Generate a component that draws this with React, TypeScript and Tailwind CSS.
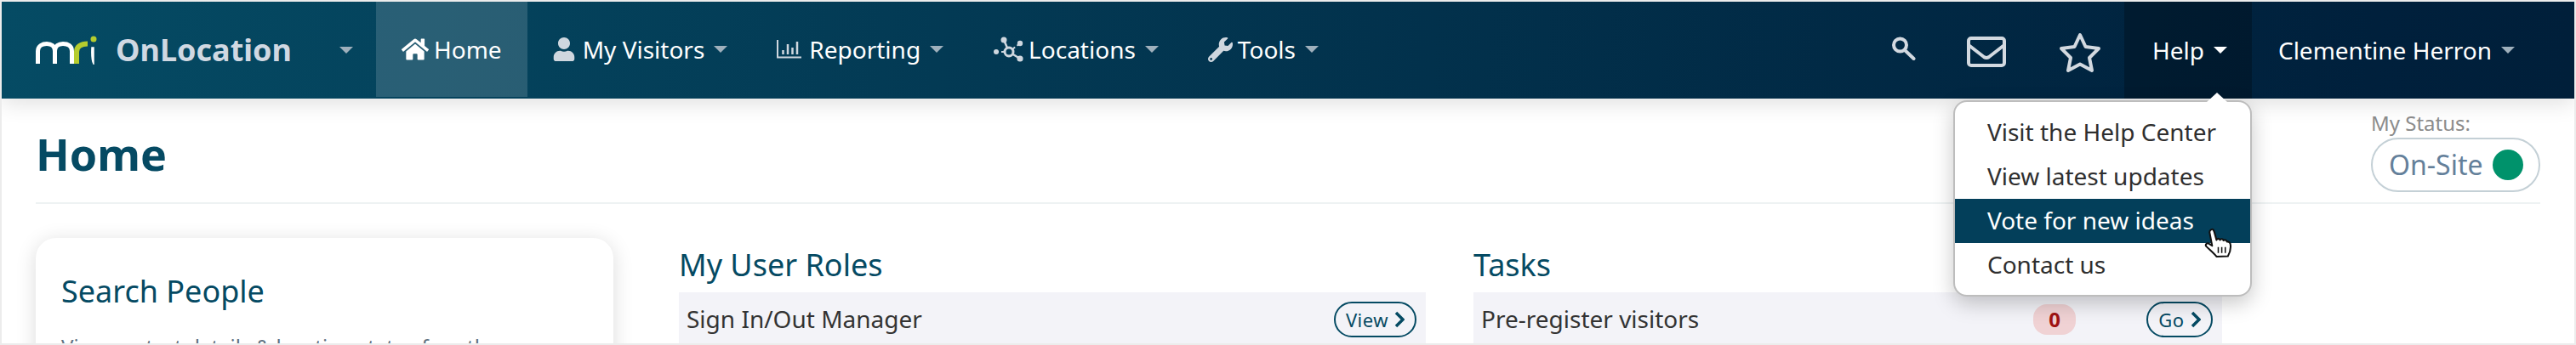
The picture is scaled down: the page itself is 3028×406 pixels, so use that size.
import type { ReactNode } from "react";
import { FaHome, FaUser, FaWrench } from "react-icons/fa";

const Caret = ({ active }: { active?: boolean }) => (
  <span
    className={`ml-[11px] inline-block h-0 w-0 border-x-[8px] border-t-[8px] border-x-transparent ${
      active ? "border-t-white" : "border-t-[#9fb0bc]"
    }`}
  />
);

function MriLogo() {
  return (
    <svg width="72" height="34" viewBox="0 0 72 34" fill="none" className="shrink-0">
      <path d="M2.5 33V18C2.5 12 8 9.5 13 9.5C18 9.5 22.5 12 22.5 18V33" stroke="#fff" strokeWidth="5" />
      <path d="M22.5 18C22.5 12 27 9.5 32 9.5C38 9.5 42.5 12 42.5 18V33" stroke="#fff" strokeWidth="5" />
      <path d="M48 33V19C48 13 53 9.5 61 9.5" stroke="#b5cc2e" strokeWidth="6" />
      <path d="M68 14V33C66 30 65.5 24 66 14Z" fill="#fff" stroke="#fff" strokeWidth="1.5" />
      <circle cx="68" cy="4" r="3.5" fill="#b5cc2e" />
    </svg>
  );
}

function ReportIcon() {
  return (
    <svg width="29" height="22" viewBox="0 0 29 22" fill="none" stroke="#cfd7df" className="mr-[9px]">
      <path d="M1 0V20.5H29" strokeWidth="2" />
      <path d="M7.5 12V17M13 5V17M18.5 9V17M24 2V17" strokeWidth="2.5" />
    </svg>
  );
}

function NetworkIcon() {
  return (
    <svg width="37" height="30" viewBox="0 0 37 30" fill="#cfd7df" stroke="#cfd7df" className="mr-[5px]">
      <path d="M19 18L13 4M19 18L32 26" strokeWidth="2.5" />
      <path d="M19 18H4M19 18L32 8" strokeWidth="2" strokeDasharray="3 3" />
      <circle cx="4" cy="18" r="3" stroke="none" />
      <circle cx="13" cy="4" r="3.5" stroke="none" />
      <circle cx="32" cy="8" r="3.2" stroke="none" />
      <circle cx="32" cy="26" r="3.6" stroke="none" />
      <circle cx="19" cy="18" r="5" fill="#033a55" strokeWidth="3" />
    </svg>
  );
}

function NavItem({ icon, label, active }: { icon: ReactNode; label: string; active?: boolean }) {
  return (
    <div className={`flex h-[112px] items-center self-start ${active ? "bg-white/15 px-[30px]" : "px-[29px]"}`}>
      {icon}
      <span className="text-[28px] text-white">{label}</span>
      {!active && <Caret />}
    </div>
  );
}

function Chevron() {
  return (
    <svg width="12" height="20" viewBox="0 0 12 20" fill="none" stroke="#054a63" strokeWidth="3.5" className="ml-[7px]">
      <path d="M2 2L10 10L2 18" />
    </svg>
  );
}

function PillButton({ label, width }: { label: string; width: string }) {
  return (
    <span className={`flex h-[42px] items-center justify-center rounded-full border-2 border-[#054a63] text-[22px] tracking-[0.5px] text-[#054a63] ${width}`}>
      {label}
      <Chevron />
    </span>
  );
}

const helpItems = ["Visit the Help Center", "View latest updates", "Vote for new ideas", "Contact us"];

function HelpMenu() {
  return (
    <div className="absolute top-full right-0 z-20 mt-[2px] w-[351px] rounded-2xl border-2 border-[#bdbdbd] bg-white pt-[10px] pb-[9px] shadow-[0_8px_24px_rgba(0,0,0,0.22)]">
      <span className="absolute -top-[11px] right-[27px] h-0 w-0 border-x-[12px] border-b-[11px] border-x-transparent border-b-white" />
      {helpItems.map((item, i) => (
        <div
          key={item}
          className={`flex h-[52px] items-center pb-[2px] pl-[38px] text-[28px] ${
            i === 2 ? "bg-[#033f5a] text-white" : "text-[#2f2f2f]"
          }`}
        >
          {item}
        </div>
      ))}
      {/* mouse pointer caught in the shot */}
      <svg width="33" height="35" viewBox="0 0 32 34" className="absolute top-[148px] right-[21px]">
        <path
          d="M8 2C10 1 11 3 11.500 5L14 14C15 12 17 12 18 14C19 12.500 21 12.500 22 14.500C23 13.500 25.500 14 26 16C28 15.500 30 17 30 20C30.500 25 29 29 27 32.500L14 33C11 29 6 25 2 21C1 19 3 17 5 18L9 20.500L6 5C6 3.500 7 2.500 8 2Z"
          fill="#fff"
          stroke="#111"
          strokeWidth="2"
          strokeLinejoin="round"
        />
        <path d="M16 22V29M20 22V29M24 22V29" stroke="#111" strokeWidth="1.5" />
      </svg>
    </div>
  );
}

function Row({ label, children }: { label: string; children: ReactNode }) {
  return (
    <div className="flex h-[64px] items-center bg-[#f3f3f8] pr-[11px] pl-[9px] text-[28px] text-[#333]">
      <span className="mb-[2px] flex-1">{label}</span>
      {children}
    </div>
  );
}

export default function App() {
  return (
    <div className="relative h-[406px] w-[3028px] overflow-hidden border-2 border-[#ececec] bg-white font-['Noto_Sans',sans-serif]">
      <nav className="relative z-10 flex h-[114px] items-center bg-[linear-gradient(95deg,#054b64_0%,#00203c_92%,#001f3a_100%)] shadow-[0_6px_24px_rgba(0,0,0,0.12)]">
        <div className="flex w-[440px] items-center pl-[40px]">
          <MriLogo />
          <span className="ml-[22px] text-[36px] font-bold text-[#d0d8e2]">OnLocation</span>
          <span className="ml-[56px] h-0 w-0 border-x-[8px] border-t-[8px] border-x-transparent border-t-[#9fb0bc]" />
        </div>
        <NavItem active label="Home" icon={<FaHome size={32} className="mr-[6px] text-white" />} />
        <NavItem label="My Visitors" icon={<FaUser size={28} className="mr-2 text-[#cfd7df]" />} />
        <NavItem label="Reporting" icon={<ReportIcon />} />
        <NavItem label="Locations" icon={<NetworkIcon />} />
        <NavItem label="Tools" icon={<FaWrench size={29} className="mr-[6px] text-[#cfd7df]" />} />
        <div className="flex-1" />
        <svg width="28" height="30" viewBox="0 0 28 30" fill="none" stroke="#d3d9e0" strokeWidth="4" className="mb-[4px]">
          <circle cx="9.500" cy="11" r="7.500" />
          <path d="M15 17L25.500 27" strokeLinecap="round" />
        </svg>
        <svg width="46" height="36" viewBox="0 0 46 36" fill="none" stroke="#d3d9e0" strokeWidth="4" className="mt-[4px] ml-[60px]">
          <rect x="2" y="2" width="42" height="32" rx="3" />
          <path d="M2 10L20 24Q23 26 26 24L44 10" />
        </svg>
        <svg width="50" height="48" viewBox="0 0 50 48" fill="none" stroke="#d3d9e0" strokeWidth="4" strokeLinejoin="round" className="mt-[5px] ml-[62px]">
          <path d="M25 3L31.500 17L47 19L36 30L39 45L25 37.500L11 45L14 30L3 19L18.500 17Z" />
        </svg>
        <div className="relative ml-[27px] flex h-[114px] items-center bg-black/25 pr-[29px] pl-[33px]">
          <span className="text-[28px] text-white">Help</span>
          <Caret active />
          <HelpMenu />
        </div>
        <div className="flex items-center pr-[70px] pl-[31px]">
          <span className="text-[28px] text-white">Clementine Herron</span>
          <Caret />
        </div>
      </nav>

      <main className="px-[40px]">
        <header className="flex h-[124px] justify-between border-b-2 border-[#eef2f3]">
          <h1 className="mt-[30px] text-[52px] leading-[70px] font-bold text-[#054a63]">Home</h1>
          <div className="mt-[12px]">
            <div className="text-[24px] leading-[34px] text-[#8c8c8c]">My Status:</div>
            <div className="flex h-[64px] w-[199px] items-center rounded-full border-2 border-[#c4d0d6] pl-[19px]">
              <span className="text-[32px] text-[#64809a]">On-Site</span>
              <span className="ml-[11px] h-[36px] w-[36px] rounded-full bg-[#00926b]" />
            </div>
          </div>
        </header>

        <div className="mt-[40px] flex items-start">
          <section className="h-[200px] w-[679px] rounded-3xl bg-white px-[30px] pt-[38px] shadow-[0_4px_24px_rgba(0,0,0,0.14)]">
            <h2 className="text-[36px] leading-[50px] text-[#054a63]">Search People</h2>
            <p className="mt-[22px] text-[24px] text-[#5f7282]">View contact details &amp; location status for other</p>
          </section>
          <section className="ml-[77px] w-[878px]">
            <h2 className="text-[36px] leading-[64px] text-[#054a63]">My User Roles</h2>
            <Row label="Sign In/Out Manager">
              <PillButton label="View" width="w-[97px]" />
            </Row>
          </section>
          <section className="ml-[56px] w-[880px]">
            <h2 className="text-[36px] leading-[64px] text-[#054a63]">Tasks</h2>
            <Row label="Pre-register visitors">
              <span className="mr-[83px] flex h-[36px] w-[50px] items-center justify-center rounded-2xl bg-[#f0d2d4] text-[24px] font-bold text-[#a01414]">0</span>
              <PillButton label="Go" width="w-[78px]" />
            </Row>
          </section>
        </div>
      </main>
    </div>
  );
}
